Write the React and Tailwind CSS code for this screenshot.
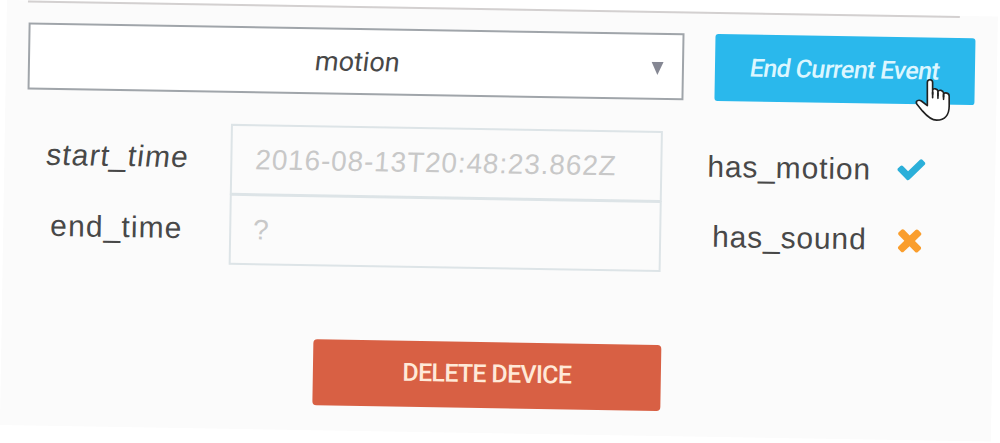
import React from 'react';

const CheckIcon = () => (
  <svg viewBox="0 0 1792 1792" className="size-8 fill-[#2bafd9]">
    <path d="M1671 566q0 40-28 68l-724 724-136 136q-28 28-68 28t-68-28l-136-136-362-362q-28-28-28-68t28-68l136-136q28-28 68-28t68 28l294 295 656-657q28-28 68-28t68 28l136 136q28 28 28 68z" />
  </svg>
);

const TimesIcon = () => (
  <svg viewBox="0 0 1792 1792" className="-ml-0.5 size-[35px] fill-[#fa9e2d]">
    <path d="M1490 1322q0 40-28 68l-136 136q-28 28-68 28t-68-28l-294-294-294 294q-28 28-68 28t-68-28l-136-136q-28-28-28-68t28-68l294-294-294-294q-28-28-28-68t28-68l136-136q28-28 68-28t68 28l294 294 294-294q28-28 68-28t68 28l136 136q28 28 28 68t-28 68l-294 294 294 294q28 28 28 68z" />
  </svg>
);

const HandCursor = () => (
  <svg
    viewBox="0 0 110 130"
    className="absolute left-[200px] top-[41px] h-[43px] w-[37px] -rotate-1 fill-white stroke-[#222] stroke-[5]"
    strokeLinejoin="round"
    strokeLinecap="round"
  >
    <path d="M38 82V12C38 1 54 1 54 12V48V35C56 29 69 30 70 39V52V40C73 33 86 35 87 44V56V47C91 41 104 44 104 53V83C104 108 92 126 66 126C48 126 35 112 23 98L6 77C1 67 12 63 20 68L38 82Z" />
    <path d="M54 42V58M70 44V60M87 49V63" />
  </svg>
);

const flags = [
  { label: 'has_motion', icon: <CheckIcon />, row: 'pl-[45px]' },
  { label: 'has_sound', icon: <TimesIcon />, row: 'pl-[51px]' },
];

const App = () => {
  return (
    <div className="h-[443px] w-full overflow-hidden bg-white font-['Roboto',sans-serif] text-[#484848]">
      <div className="ml-[7px] h-[425px] w-[991px] origin-[-7px_0] rotate-[0.95deg] bg-[#fbfbfb]">
        <div className="ml-[21px] h-[2px] w-[932px] bg-[#d3d0d0]" />

        {/* Event selector */}
        <div className="mt-5 ml-[22px] flex gap-[31px]">
          <div className="flex h-[67px] w-[656px] items-center border-2 border-[#a0a5aa] bg-white">
            <span className="flex-1 pt-0.5 pl-[33px] text-center text-[27px]">
              <span className="inline-block -skew-x-6">motion</span>
            </span>
            <svg viewBox="0 0 12 13" className="mt-1 mr-[18px] h-[13px] w-[13px] fill-[#858793]">
              <path d="M0 0H12L6 13Z" />
            </svg>
          </div>
          <button className="relative h-[67px] w-[260px] rounded-[3px] bg-[#2ab8ec] text-[25px] font-medium tracking-[-0.6px] text-[#dcf6ff]">
            <span className="inline-block -skew-x-8 whitespace-nowrap">End Current Event</span>
            <HandCursor />
          </button>
        </div>

        {/* Event details */}
        <div className="mt-[31px] flex font-['Liberation_Sans',sans-serif]">
          <div className="w-[226px] text-[30px]">
            <div className="flex h-[70px] items-center pb-[3px] pl-[42px] tracking-[1.1px]">
              <span className="inline-block -skew-x-6">start_time</span>
            </div>
            <div className="flex h-[71px] items-center pb-0.5 pl-[47px] tracking-[1.1px]">end_time</div>
          </div>
          <div className="w-[432px] text-[28px] tracking-[0.85px] text-[#c8c8c8]">
            <div className="flex h-[71px] items-center border-2 border-[#dde4e7] pl-[23px]">
              <span className="inline-block -skew-x-3">2016-08-13T20:48:23.862Z</span>
            </div>
            <div className="-mt-px flex h-[71px] items-center border-2 border-[#dde4e7] pl-[22px]">?</div>
          </div>
          <div className="text-[30px] tracking-[0.85px]">
            {flags.map((flag) => (
              <div key={flag.label} className="flex h-[70px] items-center pb-0.5">
                <div className={`w-[233px] ${flag.row}`}>{flag.label}</div>
                {flag.icon}
              </div>
            ))}
          </div>
        </div>

        {/* Delete */}
        <button className="mt-[73px] ml-[312px] block h-[66px] w-[348px] rounded-[4px] bg-[#d86044] pb-0.5 text-[25px] font-medium tracking-[-0.7px] text-[#ffe9d8]">
          DELETE DEVICE
        </button>
      </div>
    </div>
  );
};

export default App;
